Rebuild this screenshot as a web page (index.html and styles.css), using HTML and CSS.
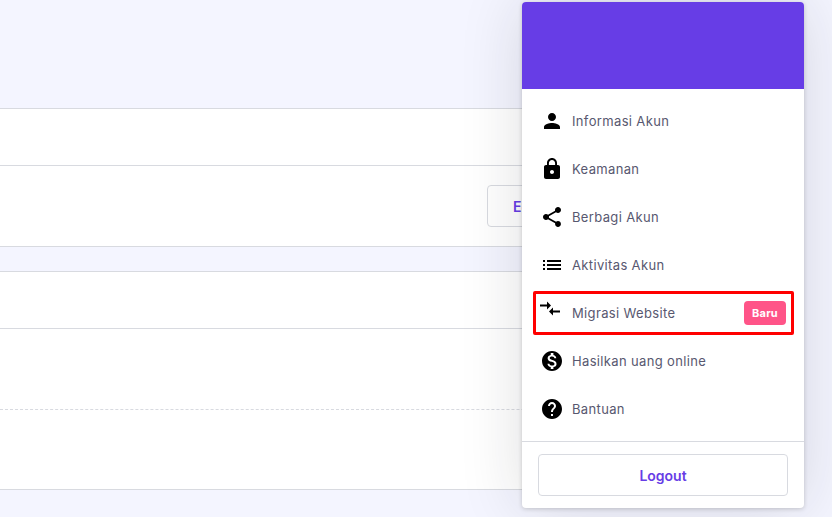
FILE: index.html
```html
<!DOCTYPE html>
<html lang="id">
<head>
<meta charset="utf-8">
<title>Akun</title>
<link rel="stylesheet" href="styles.css">
</head>
<body>
<main class="page">
  <section class="card">
    <div class="row row-a"></div>
    <div class="row row-b"><button class="edit-btn">Edit</button></div>
  </section>
  <section class="card">
    <div class="row row-a"></div>
    <div class="row row-c"><div class="dashed"></div></div>
  </section>
</main>
<aside class="menu">
  <header class="menu-head"></header>
  <nav class="menu-list">
    <a class="item"><svg class="icon" viewBox="0 0 24 24"><path d="M12 12c2.21 0 4-1.79 4-4s-1.79-4-4-4-4 1.79-4 4 1.79 4 4 4zm0 2c-2.67 0-8 1.34-8 4v2h16v-2c0-2.66-5.33-4-8-4z"/></svg><span>Informasi Akun</span></a>
    <a class="item"><svg class="icon" viewBox="0 0 24 24"><path d="M18 8h-1V6c0-2.76-2.24-5-5-5S7 3.24 7 6v2H6c-1.1 0-2 .9-2 2v10c0 1.1.9 2 2 2h12c1.1 0 2-.9 2-2V10c0-1.1-.9-2-2-2zm-6 9c-1.1 0-2-.9-2-2s.9-2 2-2 2 .9 2 2-.9 2-2 2zm3.1-9H8.9V6c0-1.71 1.39-3.1 3.1-3.1 1.71 0 3.1 1.39 3.1 3.1v2z"/></svg><span>Keamanan</span></a>
    <a class="item"><svg class="icon" viewBox="0 0 24 24"><path d="M18 16.08c-.76 0-1.44.3-1.96.77L8.91 12.7c.05-.23.09-.46.09-.7s-.04-.47-.09-.7l7.05-4.11c.54.5 1.25.81 2.04.81 1.66 0 3-1.34 3-3s-1.34-3-3-3-3 1.34-3 3c0 .24.04.47.09.7L8.04 9.81C7.5 9.31 6.79 9 6 9c-1.66 0-3 1.34-3 3s1.34 3 3 3c.79 0 1.5-.31 2.04-.81l7.12 4.16c-.05.21-.08.43-.08.65 0 1.61 1.31 2.92 2.92 2.92s2.92-1.31 2.92-2.92-1.31-2.92-2.92-2.92z"/></svg><span>Berbagi Akun</span></a>
    <a class="item"><svg class="icon" viewBox="0 0 24 24"><path d="M3 13h2v-2H3v2zm0 4h2v-2H3v2zm0-8h2V7H3v2zm4 4h14v-2H7v2zm0 4h14v-2H7v2zM7 7v2h14V7H7z"/></svg><span>Aktivitas Akun</span></a>
    <a class="item item-new"><svg class="icon" viewBox="0 0 24 24"><path transform="translate(-2 -4.5) matrix(1 0 0 -1 0 24)" d="M9.01 14H2v2h7.01v3L13 15l-3.99-4v3zm5.98-1v-3H22V8h-7.01V5L11 9l3.99 4z"/></svg><span>Migrasi Website</span><b class="badge">Baru</b></a>
    <a class="item"><svg class="icon" viewBox="0 0 24 24"><path d="M12 2C6.48 2 2 6.48 2 12s4.48 10 10 10 10-4.48 10-10S17.52 2 12 2zm1.41 16.09V20h-2.67v-1.93c-1.71-.36-3.16-1.46-3.27-3.4h1.96c.1 1.05.82 1.87 2.65 1.87 1.96 0 2.4-.98 2.4-1.59 0-.83-.44-1.61-2.67-2.14-2.48-.6-4.18-1.62-4.18-3.67 0-1.72 1.39-2.84 3.11-3.21V4h2.67v1.95c1.86.45 2.79 1.86 2.85 3.39H14.3c-.05-1.11-.64-1.87-2.22-1.87-1.5 0-2.4.68-2.4 1.64 0 .84.65 1.39 2.67 1.91s4.18 1.39 4.18 3.91c-.01 1.83-1.38 2.83-3.12 3.16z"/></svg><span>Hasilkan uang online</span></a>
    <a class="item"><svg class="icon" viewBox="0 0 24 24"><path d="M12 2C6.48 2 2 6.48 2 12s4.48 10 10 10 10-4.48 10-10S17.52 2 12 2zm1 17h-2v-2h2v2zm2.07-7.75l-.9.92C13.45 12.9 13 13.5 13 15h-2v-.5c0-1.1.45-2.1 1.17-2.83l1.24-1.26c.37-.36.59-.86.59-1.41 0-1.1-.9-2-2-2s-2 .9-2 2H8c0-2.21 1.79-4 4-4s4 1.79 4 4c0 .88-.36 1.68-.93 2.25z"/></svg><span>Bantuan</span></a>
  </nav>
  <footer class="menu-foot"><button class="logout">Logout</button></footer>
</aside>
<div class="highlight"></div>
</body>
</html>
```

FILE: styles.css
```css
* { box-sizing: border-box; }
html, body { margin: 0; height: 100%; }
body {
  width: 832px;
  height: 517px;
  overflow: hidden;
  position: relative;
  background: #f4f5ff;
  font-family: "Inter", "Liberation Sans", sans-serif;
}
.page {
  width: 700px;
  padding-top: 108px;
  display: flex;
  flex-direction: column;
  gap: 24px;
}
.card {
  background: #fff;
  border-top: 1px solid #d8dae0;
  border-bottom: 1px solid #d8dae0;
}
.row-a { height: 56px; }
.row-b {
  height: 81px;
  border-top: 1px solid #d8dae0;
  padding: 19px 0 0 487px;
}
.row-c {
  height: 161px;
  border-top: 1px solid #d8dae0;
  padding: 80px 0 0;
}
.edit-btn {
  width: 120px;
  height: 42px;
  background: #fff;
  border: 1px solid #d8dae0;
  border-radius: 4px;
  color: #673de6;
  font: 600 14px "Inter", sans-serif;
  padding: 0 0 0 0;
  text-align: left;
  text-indent: 25px;
}
.dashed { border-top: 1px dashed #d8dae0; }
.menu {
  position: absolute;
  left: 522px;
  top: 2px;
  width: 282px;
  height: 506px;
  background: #fff;
  border-radius: 4px;
  box-shadow: 0 1px 4px rgba(29, 30, 32, .2), 0 0 64px rgba(29, 30, 32, .14);
  display: flex;
  flex-direction: column;
  overflow: hidden;
}
.menu-head { height: 87px; background: #673de6; flex: none; }
.menu-list {
  flex: 1;
  padding: 8px 18px 0;
  display: flex;
  flex-direction: column;
}
.item {
  height: 48px;
  flex: none;
  display: flex;
  align-items: center;
  gap: 8px;
  color: #585870;
  font-size: 13px;
  letter-spacing: .35px;
}
.icon { width: 24px; height: 24px; flex: none; fill: #000; }
.badge {
  margin-left: auto;
  width: 42px;
  height: 24px;
  border-radius: 4px;
  background: #ff5488;
  color: #fff;
  font-size: 11px;
  font-weight: 700;
  letter-spacing: .2px;
  display: flex;
  align-items: center;
  justify-content: center;
}
.menu-foot {
  height: 67px;
  flex: none;
  border-top: 1px solid #d8dae0;
  padding: 12px 16px 0;
}
.logout {
  width: 100%;
  height: 42px;
  background: #fff;
  border: 1px solid #d8dae0;
  border-radius: 4px;
  color: #673de6;
  font: 600 14px "Inter", sans-serif;
}
.highlight {
  position: absolute;
  left: 533px;
  top: 291px;
  width: 261px;
  height: 44px;
  border: 3px solid #f00;
  border-radius: 2px;
}
```
